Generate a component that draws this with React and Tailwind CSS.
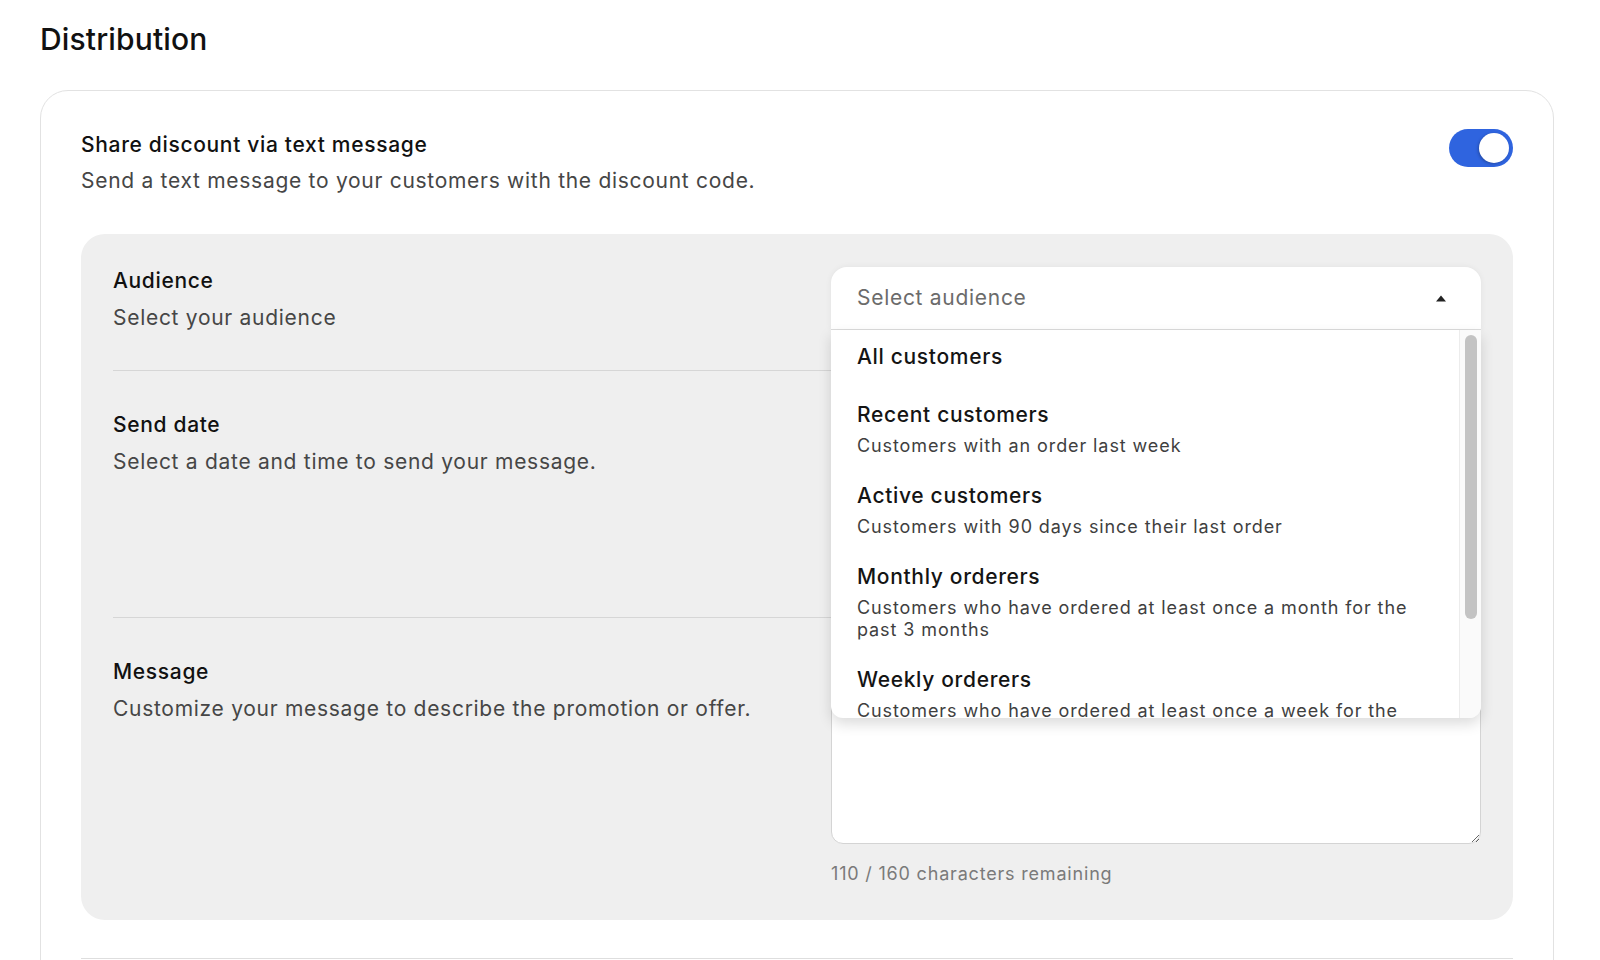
import React from 'react';

const AUDIENCES = [
  { title: 'All customers', desc: [] },
  { title: 'Recent customers', desc: ['Customers with an order last week'] },
  { title: 'Active customers', desc: ['Customers with 90 days since their last order'] },
  { title: 'Monthly orderers', desc: ['Customers who have ordered at least once a month for the', 'past 3 months'] },
  { title: 'Weekly orderers', desc: ['Customers who have ordered at least once a week for the'] },
];

function Toggle() {
  return (
    <div className="w-[64px] h-[38px] rounded-full bg-[#2f64df] flex items-center justify-end pr-[4px] shrink-0">
      <div className="w-[30px] h-[30px] rounded-full bg-white shadow-[-1px_1px_3px_rgba(0,0,0,0.25)]" />
    </div>
  );
}

function FieldLabel({ title, desc }) {
  return (
    <div>
      <div className="text-[21px] leading-[28px] font-medium text-[#111] tracking-[0.032em]">{title}</div>
      <div className="mt-[9px] text-[21px] leading-[28px] text-[#464646] tracking-[0.034em]">{desc}</div>
    </div>
  );
}

function AudienceSelect() {
  return (
    <div className="relative">
      <div className="h-[63px] bg-white rounded-t-[16px] shadow-[0_0_6px_rgba(0,0,0,0.06)] flex items-center justify-between pl-[26px] pr-[34px] border-b border-[#dcdcdc]">
        <span className="text-[21px] text-[#6b6b6b] tracking-[0.034em]">Select audience</span>
        <svg width="12" height="7" viewBox="0 0 12 7" className="mt-[1px]">
          <path d="M6 0.5 L11 6.5 L1 6.5 Z" fill="#222" />
        </svg>
      </div>
      {/* open listbox */}
      <div className="absolute left-0 right-0 top-[63px] h-[388px] bg-white rounded-b-[12px] shadow-[0_6px_14px_rgba(0,0,0,0.14)] z-20 flex overflow-hidden">
        <div className="flex-1 overflow-hidden">
          {AUDIENCES.map((a, i) => (
            <div key={a.title} className={`pl-[26px] pr-[20px] pt-[13px] ${i === 0 ? 'pb-[17px]' : 'pb-[12px]'}`}>
              <div className="text-[21px] leading-[28px] font-medium text-[#141414] tracking-[0.032em]">{a.title}</div>
              {a.desc.length > 0 && (
                <div className="mt-[6px]">
                  {a.desc.map((d) => (
                    <div key={d} className="text-[18px] leading-[22px] text-[#3f3f3f] tracking-[0.05em] whitespace-nowrap">{d}</div>
                  ))}
                </div>
              )}
            </div>
          ))}
        </div>
        <div className="w-[22px] border-l border-[#ececec] bg-[#fafafa] pt-[5px] flex justify-center">
          <div className="w-[12px] h-[284px] rounded-full bg-[#c3c3c3]" />
        </div>
      </div>
    </div>
  );
}

export default function App() {
  return (
    <div className="min-h-screen bg-white pl-10 pr-[46px] pt-[21px] pb-20" style={{ fontFamily: 'Inter, "Noto Sans", sans-serif' }}>
      <h1 className="text-[30px] leading-[36px] font-medium text-[#111] tracking-[0.005em]">Distribution</h1>

      <div className="mt-[33px] border border-[#e2e2e2] rounded-[28px] px-10 pt-10 pb-10">
        <div className="flex items-start justify-between">
          <div>
            <div className="text-[21px] leading-[28px] font-medium text-[#111] tracking-[0.032em]">Share discount via text message</div>
            <div className="mt-2 text-[21px] leading-[28px] text-[#464646] tracking-[0.034em]">Send a text message to your customers with the discount code.</div>
          </div>
          <div className="-mt-[2px]">
            <Toggle />
          </div>
        </div>

        <div className="mt-[39px] bg-[#efefef] rounded-[24px] px-8 pt-[33px] pb-8">
          {/* Audience */}
          <div className="grid grid-cols-[1fr_650px] gap-8 pb-[38px]">
            <FieldLabel title="Audience" desc="Select your audience" />
            <AudienceSelect />
          </div>
          <div className="h-px bg-[#d6d6d6]" />

          {/* Send date */}
          <div className="grid grid-cols-[1fr_650px] gap-8 py-10">
            <FieldLabel title="Send date" desc="Select a date and time to send your message." />
            <div className="flex flex-col gap-[40px]">
              <div className="h-[63px] bg-white rounded-[12px] border border-[#d0d0d0]" />
              <div className="h-[63px] bg-white rounded-[12px] border border-[#d0d0d0]" />
            </div>
          </div>
          <div className="h-px bg-[#d6d6d6]" />

          {/* Message */}
          <div className="grid grid-cols-[1fr_650px] gap-8 pt-10">
            <FieldLabel title="Message" desc="Customize your message to describe the promotion or offer." />
            <div>
              <textarea
                className="block w-full h-[186px] bg-white rounded-[12px] border border-[#d4d4d4] px-[26px] py-[16px] text-[18px] text-[#222] outline-none"
                defaultValue=""
              />
              <div className="mt-4 text-[18px] leading-[28px] text-[#7a7a7a] tracking-[0.045em]">110 / 160 characters remaining</div>
            </div>
          </div>
        </div>

        <div className="mt-[38px] h-px bg-[#dedede]" />
        <div className="h-[120px]" />
      </div>
    </div>
  );
}
